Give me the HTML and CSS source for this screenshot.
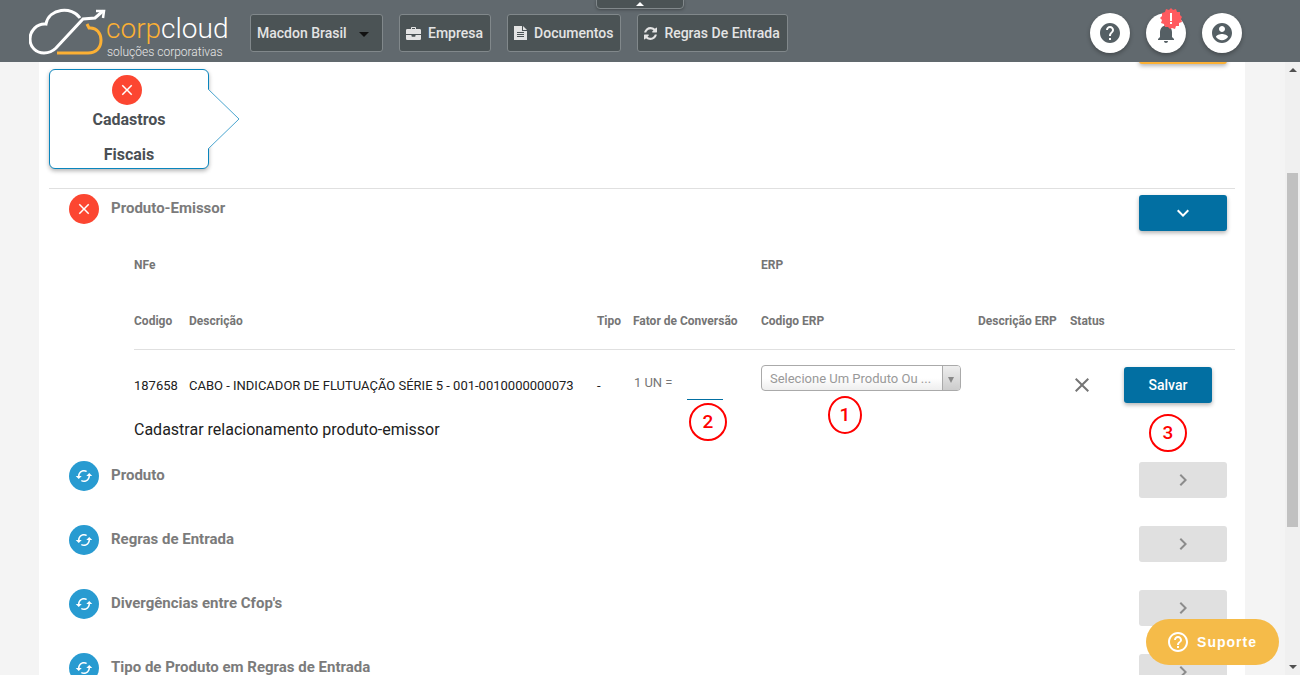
FILE: index.html
```html
<!DOCTYPE html>
<html lang="pt-BR">
<head>
<meta charset="utf-8">
<title>Corpcloud - Cadastros Fiscais</title>
<link rel="stylesheet" href="styles.css">
</head>
<body>
<svg class="defs" aria-hidden="true">
  <symbol id="close" viewBox="0 0 24 24"><path d="M19 6.41L17.59 5 12 10.59 6.41 5 5 6.41 10.59 12 5 17.59 6.41 19 12 13.41 17.59 19 19 17.59 13.41 12z"/></symbol>
  <symbol id="cached" viewBox="0 0 24 24"><path d="M19 8l-4 4h3c0 3.31-2.69 6-6 6-1.01 0-1.97-.25-2.8-.7l-1.46 1.46C8.97 19.54 10.43 20 12 20c4.42 0 8-3.58 8-8h3l-4-4zM6 12c0-3.31 2.69-6 6-6 1.01 0 1.97.25 2.8.7l1.46-1.46C15.03 4.46 13.57 4 12 4c-4.42 0-8 3.58-8 8H1l4 4 4-4H6z"/></symbol>
  <symbol id="right" viewBox="0 0 24 24"><path d="M10 6L8.59 7.41 13.17 12l-4.58 4.59L10 18l6-6z"/></symbol>
  <symbol id="down" viewBox="0 0 24 24"><path d="M16.59 8.59L12 13.17 7.41 8.59 6 10l6 6 6-6z"/></symbol>
</svg>

<header class="topbar">
  <a class="logo" href="#" aria-label="Corpcloud">
    <svg width="202" height="52" viewBox="0 0 202 52">
      <g fill="none" stroke-width="3">
        <path stroke="#fff" d="M51 11C43 -1 20 1 17 17C8 16 1 24 1 32C1 40 7 46 15 46C20 46 23 45 27 41L54 12L66 11L74 4"/>
        <path stroke="#fff" stroke-width="2.5" d="M67 4L75 4L74 11"/>
        <path stroke="#fbb034" d="M58 17L60 21C68 20 72 27 72 33C72 41 67 46 59 46H28"/>
      </g>
      <text class="logo-name" x="77" y="31"><tspan fill="#fbb034">corp</tspan><tspan fill="#fff">cloud</tspan></text>
      <text class="logo-tag" x="78" y="49">soluções corporativas</text>
    </svg>
  </a>
  <nav class="menu">
    <span class="company">
      <select class="company-select" aria-label="Empresa selecionada"><option>Macdon Brasil</option></select>
      <svg class="company-caret" width="10" height="5" viewBox="0 0 10 5"><path d="M0 0h10L5 5z"/></svg>
    </span>
    <button class="menu-button" type="button">
      <svg width="15" height="13" viewBox="0 0 15 13"><path d="M5 2V.8Q5 0 5.800 0h3.400Q10 0 10 .8V2h3.700Q15 2 15 3.300V7H0V3.300Q0 2 1.300 2zM6 2h3V1H6zM0 8h5.500v1q0 .7.700.7h2.600q.7 0 .7-.7V8H15v3.700q0 1.300-1.300 1.300H1.300Q0 13 0 11.700z"/></svg>
      Empresa</button>
    <button class="menu-button" type="button">
      <svg width="13" height="14" viewBox="0 0 13 14"><path fill-rule="evenodd" d="M0 0h8v5h5v9H0zM9 0l4 4H9zM3 6v1h7V6zM3 8v1h7V8zM3 10v1h7v-1z"/></svg>
      Documentos</button>
    <button class="menu-button" type="button">
      <svg width="13" height="13" viewBox="0 0 1536 1536"><path d="M1511 928q0 5-1 7-64 268-268 434.500T764 1536q-146 0-282.500-55T238 1324l-129 129q-19 19-45 19t-45-19T0 1408V960q0-26 19-45t45-19h448q26 0 45 19t19 45-19 45l-137 137q71 66 161 102t187 36q134 0 250-65t186-179q11-17 53-117 8-23 30-23h192q13 0 22.500 9.500t9.500 22.500zm25-800v448q0 26-19 45t-45 19h-448q-26 0-45-19t-19-45 19-45l138-138Q969 256 768 256q-134 0-250 65T332 500q-11 17-53 117-8 23-30 23H50q-13 0-22.500-9.500T18 608v-7q65-268 270-434.500T768 0q146 0 284 55.500T1297 212l130-129q19-19 45-19t45 19 19 45z"/></svg>
      Regras De Entrada</button>
  </nav>
  <div class="actions">
    <button class="round" type="button" aria-label="Ajuda"><svg width="24" height="24" viewBox="0 0 24 24"><path d="M12 2C6.480 2 2 6.480 2 12s4.480 10 10 10 10-4.480 10-10S17.520 2 12 2zm1 17h-2v-2h2v2zm2.070-7.750l-.9.920C13.450 12.900 13 13.500 13 15h-2v-.5c0-1.100.450-2.100 1.170-2.830l1.240-1.260c.370-.360.590-.860.590-1.410 0-1.100-.9-2-2-2s-2 .9-2 2H8c0-2.210 1.790-4 4-4s4 1.790 4 4c0 .880-.360 1.680-.930 2.250z"/></svg></button>
    <button class="round" type="button" aria-label="Notificações"><svg width="24" height="24" viewBox="0 0 24 24"><path d="M12 22c1.100 0 2-.9 2-2h-4c0 1.100.890 2 2 2zm6-6v-5c0-3.070-1.640-5.640-4.500-6.320V4c0-.830-.670-1.500-1.500-1.500s-1.500.670-1.500 1.500v.680C7.630 5.360 6 7.920 6 11v5l-2 2v1h16v-1l-2-2z"/></svg>
      <svg class="alert" width="22" height="22" viewBox="0 0 22 22"><path fill="#ff5a5f" d="M11 0l2 2 3-1 1 3 3 0 0 3 2 2-1 2 1 3-3 1 0 3-3 0-1 3-3-1-2 1-2-2-3 0-1-3-3-1 1-3-2-2 2-2 0-3 3-1 1-3 3 1z"/><path fill="#fff" d="M10 5h2v8h-2zM10 14h2v2h-2z"/></svg>
    </button>
    <button class="round" type="button" aria-label="Conta"><svg width="24" height="24" viewBox="0 0 24 24"><path d="M12 2C6.480 2 2 6.480 2 12s4.480 10 10 10 10-4.480 10-10S17.520 2 12 2zm0 3c1.660 0 3 1.340 3 3s-1.340 3-3 3-3-1.340-3-3 1.340-3 3-3zm0 14.200c-2.500 0-4.710-1.280-6-3.220.030-1.990 4-3.080 6-3.080 1.990 0 5.970 1.090 6 3.080-1.290 1.940-3.500 3.220-6 3.220z"/></svg></button>
  </div>
  <button class="collapse" type="button" aria-label="Recolher"><svg width="8" height="4" viewBox="0 0 8 4"><path d="M0 4h8L4 0z"/></svg></button>
</header>

<div class="viewport">
  <main class="page">
    <div class="panel">
      <div class="steps">
        <div class="step">
          <span class="status status-error"><svg width="18" height="18"><use href="#close"/></svg></span>
          <span>Cadastros</span>
          <span>Fiscais</span>
          <svg class="step-arrow" width="32" height="62" viewBox="0 0 32 62"><path d="M0 1L31 31L0 61"/></svg>
        </div>
        <button class="warn-button" type="button" aria-label="Ação"></button>
      </div>

      <section class="rule">
        <span class="status status-error"><svg width="18" height="18"><use href="#close"/></svg></span>
        <h2 class="rule-title">Produto-Emissor</h2>
        <button class="button toggle" type="button" aria-label="Recolher Produto-Emissor"><svg width="24" height="24"><use href="#down"/></svg></button>
      </section>

      <div class="detail">
        <table class="grid">
          <colgroup><col class="c-code"><col><col class="c-type"><col class="c-factor"><col class="c-erp"><col class="c-desc"><col class="c-status"><col class="c-save"></colgroup>
          <thead>
            <tr><th colspan="4">NFe</th><th colspan="4">ERP</th></tr>
            <tr><th>Codigo</th><th>Descrição</th><th>Tipo</th><th>Fator de Conversão</th><th>Codigo ERP</th><th>Descrição ERP</th><th>Status</th><th></th></tr>
          </thead>
          <tbody>
            <tr>
              <td>187658</td>
              <td>CABO - INDICADOR DE FLUTUAÇÃO SÉRIE 5 - 001-0010000000073</td>
              <td>-</td>
              <td><div class="factor"><label for="factor">1 UN =</label><input id="factor" class="factor-input" type="text"></div><span class="mark mark-two">2</span></td>
              <td><div class="picker"><select class="picker-select" aria-label="Codigo ERP"><option>Selecione Um Produto Ou ...</option></select><span class="picker-arrow"><svg width="6" height="6" viewBox="0 0 6 6"><path d="M0 0h6L3 6z"/></svg></span></div><span class="mark mark-one">1</span></td>
              <td></td>
              <td><svg class="missing" width="24" height="24"><use href="#close"/></svg></td>
              <td><button class="button" type="button">Salvar</button><span class="mark mark-three">3</span></td>
            </tr>
          </tbody>
        </table>
        <p class="hint">Cadastrar relacionamento produto-emissor</p>
      </div>

      <section class="rule">
        <span class="status"><svg width="18" height="18"><use href="#cached"/></svg></span>
        <h2 class="rule-title">Produto</h2>
        <button class="button toggle" type="button" disabled aria-label="Abrir Produto"><svg width="24" height="24"><use href="#right"/></svg></button>
      </section>
      <section class="rule">
        <span class="status"><svg width="18" height="18"><use href="#cached"/></svg></span>
        <h2 class="rule-title">Regras de Entrada</h2>
        <button class="button toggle" type="button" disabled aria-label="Abrir Regras de Entrada"><svg width="24" height="24"><use href="#right"/></svg></button>
      </section>
      <section class="rule">
        <span class="status"><svg width="18" height="18"><use href="#cached"/></svg></span>
        <h2 class="rule-title">Divergências entre Cfop's</h2>
        <button class="button toggle" type="button" disabled aria-label="Abrir Divergências"><svg width="24" height="24"><use href="#right"/></svg></button>
      </section>
      <section class="rule">
        <span class="status"><svg width="18" height="18"><use href="#cached"/></svg></span>
        <h2 class="rule-title">Tipo de Produto em Regras de Entrada</h2>
        <button class="button toggle" type="button" disabled aria-label="Abrir Tipo de Produto"><svg width="24" height="24"><use href="#right"/></svg></button>
      </section>
    </div>
  </main>
  <div class="scroll" aria-hidden="true">
    <svg width="8" height="4" viewBox="0 0 8 4"><path d="M0 4h8L4 0z"/></svg>
    <div class="scroll-track"><div class="scroll-thumb"></div></div>
    <svg width="8" height="4" viewBox="0 0 8 4"><path d="M0 0h8L4 4z"/></svg>
  </div>
</div>

<button class="support" type="button">
  <svg width="20" height="20" viewBox="2 2 20 20"><path d="M11 18h2v-2h-2v2zm1-16C6.480 2 2 6.480 2 12s4.480 10 10 10 10-4.480 10-10S17.520 2 12 2zm0 18c-4.410 0-8-3.590-8-8s3.590-8 8-8 8 3.590 8 8-3.590 8-8 8zm0-14c-2.210 0-4 1.790-4 4h2c0-1.100.9-2 2-2s2 .9 2 2c0 2-3 1.750-3 5h2c0-2.250 3-2.500 3-5 0-2.210-1.790-4-4-4z"/></svg>
  Suporte</button>
</body>
</html>
```
FILE: styles.css
```css
* { box-sizing: border-box; }
body {
  margin: 0;
  height: 100vh;
  display: flex;
  flex-direction: column;
  overflow: hidden;
  background: #f4f4f4;
  color: #212121;
  font-family: Roboto, "Liberation Sans", sans-serif;
  font-size: 13px;
}
button, select, input { font-family: inherit; margin: 0; }
svg { display: block; fill: currentColor; flex: none; }
.defs { position: absolute; width: 0; height: 0; }

/* Top bar */
.topbar {
  position: relative;
  z-index: 2;
  flex: none;
  display: flex;
  align-items: center;
  height: 62px;
  padding: 4px 58px 0 29px;
  background: #61696e;
}
.logo { width: 221px; }
.logo-name { font-size: 28px; font-weight: 300; }
.logo-tag { font-size: 12px; font-weight: 300; fill: #e8e8e8; }
.menu { display: flex; gap: 16px; }
.company { position: relative; }
.company-select, .menu-button {
  height: 38px;
  padding: 0 7px 0 6px;
  border: 1px solid #81888b;
  border-radius: 3px;
  background: #4b5355;
  color: #e4e4e4;
  font-size: 14px;
  font-weight: 500;
}
.company-select { appearance: none; width: 133px; }
.company-caret { position: absolute; right: 14px; top: 18px; fill: #111; pointer-events: none; }
.menu-button { display: flex; align-items: center; gap: 7px; }
.actions { display: flex; gap: 16px; margin-left: auto; }
.round {
  position: relative;
  display: flex;
  align-items: center;
  justify-content: center;
  width: 40px;
  height: 40px;
  padding: 0;
  border: 0;
  border-radius: 50%;
  background: #fff;
  color: #555f64;
  box-shadow: 0 2px 4px rgba(0, 0, 0, .3);
}
.alert { position: absolute; left: 14px; top: -5px; }
.collapse {
  position: absolute;
  top: -1px;
  left: calc(50% - 54px);
  display: flex;
  align-items: center;
  justify-content: center;
  width: 88px;
  height: 10px;
  padding: 0;
  border: 1px solid #81888b;
  border-radius: 0 0 4px 4px;
  background: #4b5355;
  color: #fff;
  box-shadow: 0 1px 3px rgba(0, 0, 0, .3);
}

/* Page area */
.viewport { flex: 1; min-height: 0; display: flex; }
.page { flex: 1; overflow: hidden; padding: 0 40px 0 39px; }
.panel { min-height: 100%; padding: 0 10px; background: #fff; }
.steps {
  display: flex;
  justify-content: space-between;
  align-items: flex-start;
  height: 127px;
  padding: 7px 8px 0 0;
  border-bottom: 1px solid #e0e0e0;
}
.step {
  position: relative;
  display: flex;
  flex-direction: column;
  align-items: center;
  width: 160px;
  height: 100px;
  padding-top: 5px;
  border: 1px solid #0a85bd;
  border-radius: 6px;
  background: #fff;
  box-shadow: 0 2px 4px rgba(0, 0, 0, .3);
  color: #4b5055;
  font-size: 16px;
  font-weight: 700;
  line-height: 35px;
}
.step .status { margin: 0 4px -3px 0; }
.step-arrow { position: absolute; left: 158px; top: 18px; fill: #fff; stroke: #4aa5cf; }
.warn-button {
  width: 88px;
  height: 36px;
  margin-top: -41px;
  border: 0;
  border-radius: 3px;
  background: #fbb034;
  box-shadow: 0 2px 4px rgba(0, 0, 0, .3);
}
.status {
  flex: none;
  display: flex;
  align-items: center;
  justify-content: center;
  width: 30px;
  height: 30px;
  border-radius: 50%;
  background: #289bd1;
  color: #fff;
}
.status-error { background: #fc4631; }

.rule {
  display: flex;
  align-items: flex-start;
  height: 64px;
  padding: 5px 8px 0 20px;
}
.rule-title {
  flex: 1;
  margin: 0 0 0 12px;
  color: #7b7b7b;
  font-size: 15px;
  font-weight: 700;
  line-height: 28px;
}
.button {
  display: flex;
  align-items: center;
  justify-content: center;
  width: 88px;
  height: 36px;
  padding: 0;
  border: 0;
  border-radius: 3px;
  background: #026fa2;
  color: #fff;
  font-size: 14px;
  font-weight: 500;
  box-shadow: 0 2px 4px rgba(0, 0, 0, .3);
}
.toggle { margin-top: 1px; }
.button:disabled { background: #e0e0e0; color: #8c8c8c; box-shadow: none; }

/* Expanded rule */
.detail { margin-top: -16px; padding-left: 85px; }
.grid { width: 100%; table-layout: fixed; border-collapse: collapse; }
.c-code { width: 55px; }
.c-type { width: 36px; }
.c-factor { width: 128px; }
.c-erp { width: 217px; }
.c-desc { width: 92px; }
.c-status { width: 54px; }
.c-save { width: 111px; }
.grid th {
  height: 56px;
  padding: 0;
  color: #757575;
  font-size: 12px;
  font-weight: 700;
  text-align: left;
  white-space: nowrap;
}
.grid tbody tr { border-top: 1px solid #e0e0e0; }
.grid td { position: relative; height: 72px; padding: 0; white-space: nowrap; }
.factor { display: flex; padding-bottom: 4px; color: #757575; line-height: 34px; }
.factor label { width: 54px; padding-left: 1px; }
.factor-input {
  width: 36px;
  height: 34px;
  padding: 0;
  border: 0;
  border-bottom: 1px solid #026fa2;
  background: none;
}
.picker { position: relative; width: 200px; height: 40px; }
.picker-select {
  appearance: none;
  width: 200px;
  height: 26px;
  padding: 0 26px 0 8px;
  border: 1px solid #aaa;
  border-radius: 4px;
  background: linear-gradient(#fff 50%, #eee);
  color: #999;
  font-size: 13px;
}
.picker-arrow {
  position: absolute;
  right: 1px;
  top: 1px;
  display: flex;
  align-items: center;
  justify-content: center;
  width: 18px;
  height: 24px;
  padding-top: 3px;
  border-left: 1px solid #aaa;
  border-radius: 0 3px 3px 0;
  background: linear-gradient(#eee, #ccc);
  color: #888;
  pointer-events: none;
}
.missing { color: #757575; }
.hint { margin: 0; padding-bottom: 17px; font-size: 16px; line-height: 18px; }

/* Numbered callouts over the row */
.mark {
  position: absolute;
  display: flex;
  align-items: center;
  justify-content: center;
  width: 38px;
  height: 38px;
  border: 2px solid #f00;
  border-radius: 50%;
  color: #f00;
  font-size: 19px;
  font-weight: 500;
}
.mark-one { left: 67px; top: 46px; width: 34px; }
.mark-two { left: 56px; top: 53px; }
.mark-three { left: 25px; top: 64px; }

.scroll {
  flex: none;
  display: flex;
  flex-direction: column;
  align-items: center;
  width: 15px;
  padding: 6px 0;
  background: #f0f0f0;
  color: #505050;
}
.scroll-track { flex: 1; width: 11px; padding: 0; display: flex; flex-direction: column; }
.scroll-track::before { content: ""; flex: 101; }
.scroll-thumb { flex: 354; background: #c1c1c1; }
.scroll-track::after { content: ""; flex: 138; }

.support {
  position: fixed;
  right: 21px;
  bottom: 10px;
  z-index: 3;
  display: flex;
  align-items: center;
  gap: 9px;
  height: 46px;
  padding: 0 22px;
  border: 0;
  border-radius: 23px;
  background: #f5bb49;
  color: #fff;
  font-family: "Liberation Sans", Arial, sans-serif;
  font-size: 14px;
  font-weight: 700;
  letter-spacing: 1px;
}
```
